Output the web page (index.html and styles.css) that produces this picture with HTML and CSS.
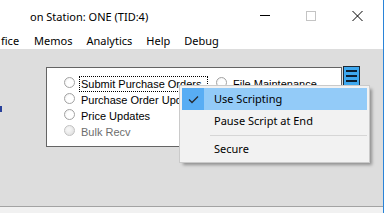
FILE: index.html
```html
<!DOCTYPE html>
<html lang="en">
<head>
<meta charset="utf-8">
<title>Station ONE</title>
<link rel="stylesheet" href="styles.css">
</head>
<body>
<div class="screen">
  <div class="titlebar">
    <span class="title">on Station: ONE (TID:4)</span>
    <div class="controls">
      <span class="ctl"><svg width="10" height="10" viewBox="0 0 10 10"><path d="M0 4.5H10" stroke="#000" stroke-width="1"/></svg></span>
      <span class="ctl"><svg width="10" height="10" viewBox="0 0 10 10"><rect x="0.5" y="0.5" width="9" height="9" fill="none" stroke="#c4c4c4" stroke-width="1"/></svg></span>
      <span class="ctl"><svg width="11" height="10" viewBox="0 0 11 10"><path d="M0.5 0L10.5 10M10.5 0L0.5 10" stroke="#000" stroke-width="1"/></svg></span>
    </div>
  </div>
  <nav class="menubar">
    <span class="mitem first">fice</span>
    <span class="mitem">Memos</span>
    <span class="mitem">Analytics</span>
    <span class="mitem">Help</span>
    <span class="mitem">Debug</span>
  </nav>
  <div class="client">
    <span class="fragment"></span>
    <div class="panel">
      <div class="col col1">
        <div class="radio"><span class="dot"></span><span class="label focus">Submit Purchase Orders</span></div>
        <div class="radio"><span class="dot"></span><span class="label">Purchase Order Updates</span></div>
        <div class="radio"><span class="dot"></span><span class="label">Price Updates</span></div>
        <div class="radio"><span class="dot disabled"></span><span class="label disabled">Bulk Recv</span></div>
      </div>
      <div class="col">
        <div class="radio"><span class="dot"></span><span class="label">File Maintenance</span></div>
      </div>
    </div>
    <div class="hamb"><span class="bar"></span><span class="bar"></span><span class="bar"></span></div>
  </div>
  <div class="bottomline"></div>

  <div class="ctxmenu">
    <div class="citem hi"><span class="chk on"><svg width="22" height="22" viewBox="0 0 22 22"><path d="M7 11.5L10 14.5L16 8.5" fill="none" stroke="#262a30" stroke-width="1.3"/></svg></span><span class="ctext">Use Scripting</span></div>
    <div class="citem"><span class="chk"></span><span class="ctext">Pause Script at End</span></div>
    <div class="sep"></div>
    <div class="citem"><span class="chk"></span><span class="ctext">Secure</span></div>
  </div>
</div>
</body>
</html>
```

FILE: styles.css
```css
* { box-sizing: border-box; }
html, body { margin: 0; padding: 0; }
body {
  width: 391px;
  height: 213px;
  overflow: hidden;
  background: #ffffff;
  font-family: "Noto Sans", "Open Sans", sans-serif;
  font-size: 11px;
  color: #000;
}
.screen {
  position: relative;
  width: 384px;
  height: 213px;
  border-right: 1px solid #2a84d8;
  background: #f1f1f1;
  display: flex;
  flex-direction: column;
}
.titlebar {
  height: 31px;
  flex: none;
  background: #fff;
  display: flex;
}
.title {
  padding-left: 30px;
  padding-top: 2px;
  line-height: 29px;
  white-space: nowrap;
}
.controls {
  margin-left: auto;
  display: flex;
  padding-right: 3px;
}
.ctl {
  width: 46px;
  height: 31px;
  display: flex;
  justify-content: center;
  padding-top: 11px;
}
.ctl svg { display: block; }
.menubar {
  height: 18px;
  flex: none;
  background: #fff;
  display: flex;
  padding-top: 1px;
  line-height: 17px;
  white-space: nowrap;
  overflow: hidden;
}
.mitem { padding: 0 7px; }
.mitem.first { padding-left: 1px; padding-right: 8px; }
.client {
  height: 157px;
  flex: none;
  background: #dddddd;
  display: flex;
  align-items: flex-start;
  padding-top: 17px;
}
.fragment {
  width: 2px;
  height: 6px;
  margin-top: 40px;
  background: #28409a;
  flex: none;
}
.panel {
  margin-left: 44px;
  margin-top: 1px;
  width: 296px;
  height: 80px;
  flex: none;
  background: #fff;
  border: 1px solid #646464;
  display: flex;
  padding: 8px 0 0 17px;
  overflow: hidden;
  font-family: "Liberation Sans", Arial, sans-serif;
  font-size: 11px;
}
.col1 { width: 152px; flex: none; }
.radio {
  height: 16px;
  display: flex;
  align-items: flex-start;
}
.dot {
  width: 11px;
  height: 11px;
  margin-top: 1px;
  flex: none;
  border-radius: 50%;
  border: 1px solid #a2a2a2;
  background: radial-gradient(circle at 60% 60%, #ffffff 45%, #e9e9e9 100%);
}
.dot.disabled {
  border-color: #c2c2c2;
  background: radial-gradient(circle at 40% 40%, #f4f4f4 20%, #d9d9d9 100%);
}
.label {
  margin-left: 4px;
  padding: 0 1px;
  border: 1px dotted transparent;
  line-height: 14px;
  white-space: nowrap;
}
.label.focus { border-color: #000; padding-right: 6px; }
.label.disabled { color: #6d6d6d; }
.hamb {
  margin-left: 1px;
  width: 17px;
  height: 20px;
  flex: none;
  border: 1px solid #1d2a36;
  background: #3ea8ef;
  padding: 3px 2px 0;
  display: flex;
  flex-direction: column;
  gap: 3px;
}
.bar {
  height: 2px;
  background: #0c1e30;
}
.bottomline {
  height: 1px;
  flex: none;
  background: #a3a3a3;
}
.ctxmenu {
  position: absolute;
  left: 179px;
  top: 85px;
  width: 191px;
  height: 78px;
  padding: 2px;
  background: #f2f2f2;
  border: 1px solid #cacaca;
  box-shadow: 3px 3px 3px -1px rgba(0, 0, 0, 0.35);
}
.citem {
  height: 22px;
  display: flex;
  line-height: 22px;
  white-space: nowrap;
}
.citem.hi { background: #93cbf8; }
.chk {
  width: 22px;
  height: 22px;
  flex: none;
}
.chk.on { background: #58adf4; }
.chk svg { display: block; }
.ctext { margin-left: 10px; }
.sep {
  margin: 3px 0 2px 28px;
  border-top: 1px solid #d6d6d6;
}
```
